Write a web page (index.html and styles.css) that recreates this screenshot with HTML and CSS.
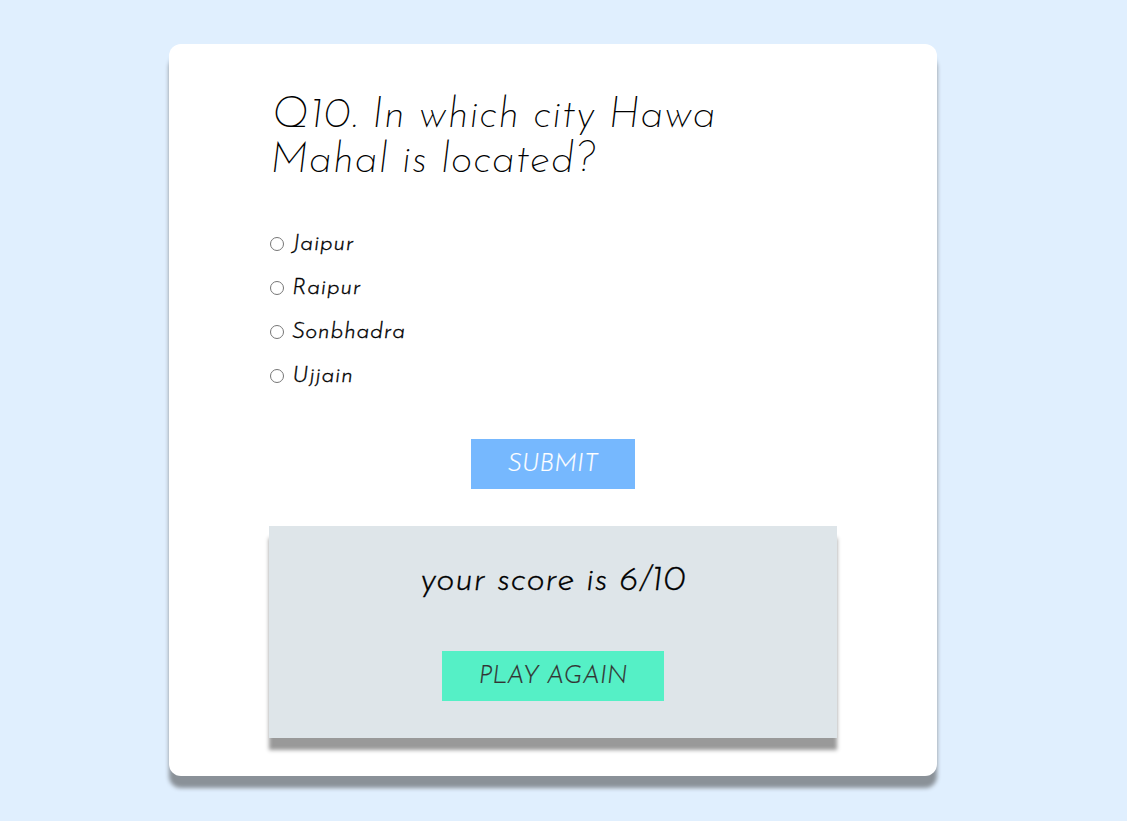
FILE: index.html
```html
<!DOCTYPE html>
<html lang="en">
<head>
<meta charset="utf-8">
<title>Quiz</title>
<link rel="stylesheet" href="styles.css">
</head>
<body>
<div class="page">
  <div class="card">
    <h2 class="question">Q10. In which city Hawa Mahal is located?</h2>
    <ul class="options">
      <li class="option"><label><input type="radio" name="ans"> <span>Jaipur</span></label></li>
      <li class="option"><label><input type="radio" name="ans"> <span>Raipur</span></label></li>
      <li class="option"><label><input type="radio" name="ans"> <span>Sonbhadra</span></label></li>
      <li class="option"><label><input type="radio" name="ans"> <span>Ujjain</span></label></li>
    </ul>
    <div class="submit-row">
      <button class="submit">SUBMIT</button>
    </div>
    <div class="score">
      <h3 class="score-text">your score is 6/10</h3>
      <button class="again">PLAY AGAIN</button>
    </div>
  </div>
</div>
</body>
</html>
```

FILE: styles.css
```css
* { box-sizing: border-box; }
html, body { margin: 0; padding: 0; }
body {
  background: #e0effe;
  font-family: "Josefin Sans", "Lato", "Open Sans", sans-serif;
  color: #000;
}
.page {
  display: flex;
  justify-content: center;
  padding: 44px 21px 40px 0;
}
.card {
  width: 768px;
  background: #fff;
  border-radius: 12px;
  padding: 50px 100px 38px;
  box-shadow: 0 12px 4px #8a9198;
  font-style: italic;
  font-weight: 300;
}
.question {
  margin: 0;
  padding: 0 110px 0 1px;
  font-size: 42px;
  line-height: 45px;
  font-weight: 200;
  letter-spacing: 0.8px;
}
.options {
  list-style: none;
  margin: 38px 0 0;
  padding: 0;
}
.option {
  height: 44px;
  display: flex;
  align-items: center;
  font-size: 23px;
  letter-spacing: 0.7px;
  -webkit-text-stroke: 0.35px #000;
}
.option label { display: flex; align-items: center; }
.option input {
  margin: 0 8px 0 1px;
  width: 14px;
  height: 14px;
}
.submit-row {
  display: flex;
  justify-content: center;
  margin-top: 41px;
}
.submit {
  width: 164px;
  height: 50px;
  border: none;
  background: #76b8fe;
  color: #fff;
  font: inherit;
  font-size: 25px;
  padding: 0;
  -webkit-text-stroke: 0.2px #fff;
}
.score {
  margin-top: 37px;
  background: #dee5e9;
  box-shadow: 0 12px 4px #999;
  display: flex;
  flex-direction: column;
  align-items: center;
  padding: 36px 0 37px;
}
.score-text {
  margin: 0;
  font-size: 35px;
  line-height: 40px;
  font-weight: 300;
  letter-spacing: 0.6px;
  -webkit-text-stroke: 0.3px #000;
}
.again {
  margin-top: 49px;
  width: 222px;
  height: 50px;
  border: none;
  background: #55f0c6;
  color: #333;
  font: inherit;
  font-size: 25px;
  padding: 0;
  -webkit-text-stroke: 0.2px #333;
}
```
